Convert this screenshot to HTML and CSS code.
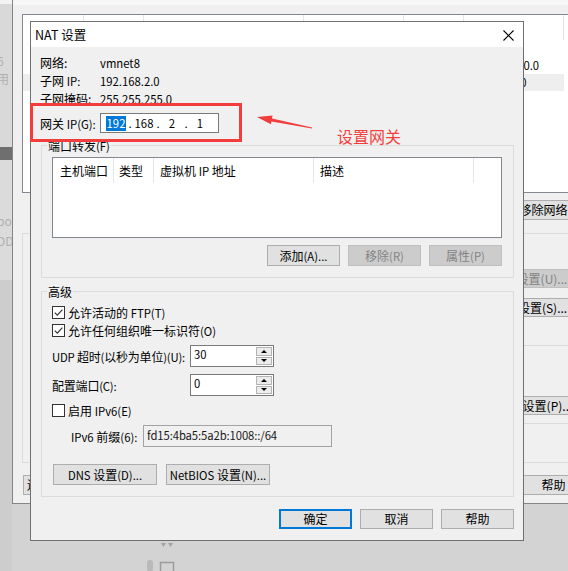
FILE: index.html
```html
<!DOCTYPE html>
<html lang="zh-CN">
<head>
<meta charset="utf-8">
<title>NAT 设置</title>
<link rel="stylesheet" href="styles.css">
</head>
<body>
<div class="desk">
  <div class="vm-side">
    <div class="side-a"><span class="side-glyph">6</span><span class="side-glyph">用</span></div>
    <div class="side-b"></div>
    <div class="side-c"><span class="side-glyph">po</span><span class="side-glyph">DD</span></div>
    <div class="side-d"></div>
  </div>

  <svg class="desk-icons" width="32" height="34" viewBox="0 0 32 34">
    <rect x="20" y="1" width="6" height="3" fill="#a9a9a9"/>
    <path d="M16 6 h5 l-2.5 4 z M23 6 h5 l-2.5 4 z" fill="#a3a3a3"/>
    <rect x="2" y="23" width="6" height="12" rx="3" fill="#b9b9b9"/>
    <rect x="15.5" y="25.5" width="13" height="10" fill="none" stroke="#9c9c9c" stroke-width="1.5"/>
  </svg>

  <div class="editor">
    <div class="ed-strip"></div>
    <div class="ed-list">
      <div class="ed-grid ed-head">
        <span></span><span></span><span></span><span></span><span></span><span></span>
      </div>
      <div class="ed-grid ed-row"><span></span><span></span><span></span><span></span><span></span><span></span></div>
      <div class="ed-grid ed-row"><span></span><span></span><span></span><span></span><span></span><span class="sub">192.168.100.0</span></div>
      <div class="ed-grid ed-row sel"><span></span><span></span><span></span><span></span><span></span><span class="sub">192.168.2.0</span></div>
    </div>
    <div class="ed-btns">
      <button class="btn ed-b1"></button>
      <button class="btn ed-b2">移除网络(O)</button>
      <button class="btn ed-b3">重命名网络(W)...</button>
    </div>
    <div class="ed-group">
      <div class="ed-side">
        <button class="btn off ed-set u">自动设置(U)...</button>
        <button class="btn ed-set s">NAT 设置(S)...</button>
        <div class="ed-line l1"></div>
        <button class="btn ed-set p">DHCP 设置(P)...</button>
        <div class="ed-line l2"></div>
      </div>
    </div>
    <div class="ed-foot">
      <button class="btn ed-reset"><span class="ed-reset-txt">还原默认设置(R)</span></button>
      <div class="ed-foot-right">
        <button class="btn ed-fb"></button>
        <button class="btn ed-fb"></button>
        <button class="btn ed-fb"></button>
        <button class="btn ed-fb">帮助</button>
      </div>
    </div>
  </div>

  <div class="nat">
    <div class="nat-title">
      <span>NAT 设置</span>
      <svg class="nat-close" width="11" height="11" viewBox="0 0 11 11"><path d="M0.5 0.5 L10.5 10.5 M10.5 0.5 L0.5 10.5" stroke="#000" stroke-width="1.1" fill="none"/></svg>
    </div>
    <div class="nat-body">
      <div class="info">
        <span>网络:</span><span class="en">vmnet8</span>
        <span>子网 <span class="en">IP:</span></span><span class="en">192.168.2.0</span>
        <span>子网掩码:</span><span class="en">255.255.255.0</span>
      </div>
      <div class="gw-row">
        <span class="gw-label">网关 <span class="en">IP(G):</span></span>
        <div class="ipbox en">
          <span class="oct"><span class="oct-sel">192</span></span><span class="dot">.</span><span class="oct">168</span><span class="dot">.</span><span class="oct">2</span><span class="dot">.</span><span class="oct">1</span>
        </div>
      </div>

      <div class="group g-ports">
        <div class="g-title">端口转发<span class="en">(F)</span></div>
        <div class="lv">
          <div class="lv-head">
            <span class="h1">主机端口</span><span class="h2">类型</span><span class="h3">虚拟机 <span class="en">IP</span> 地址</span><span class="h4">描述</span>
          </div>
        </div>
        <div class="btn-row">
          <button class="btn w73">添加<span class="en">(A)...</span></button>
          <button class="btn off w73">移除<span class="en">(R)</span></button>
          <button class="btn off w73">属性<span class="en">(P)</span></button>
        </div>
      </div>

      <div class="group g-adv">
        <div class="g-title">高级</div>
        <div class="chk-row first">
          <span class="chk"><svg width="11" height="11" viewBox="0 0 11 11"><path d="M1.8 5.6 L4.3 8.1 L9.4 2.6" stroke="#333" stroke-width="1.2" fill="none"/></svg></span>
          <span>允许活动的 <span class="en">FTP(T)</span></span>
        </div>
        <div class="chk-row">
          <span class="chk"><svg width="11" height="11" viewBox="0 0 11 11"><path d="M1.8 5.6 L4.3 8.1 L9.4 2.6" stroke="#333" stroke-width="1.2" fill="none"/></svg></span>
          <span>允许任何组织唯一标识符<span class="en">(O)</span></span>
        </div>
        <div class="spin-row udp">
          <span class="spin-label"><span class="en">UDP</span> 超时<span class="en">(</span>以秒为单位<span class="en">)(U):</span></span>
          <div class="spin">
            <span class="spin-val en">30</span>
            <span class="spin-btns"><span class="spin-b up"></span><span class="spin-b down"></span></span>
          </div>
        </div>
        <div class="spin-row port">
          <span class="spin-label">配置端口<span class="en">(C):</span></span>
          <div class="spin">
            <span class="spin-val en">0</span>
            <span class="spin-btns"><span class="spin-b up"></span><span class="spin-b down"></span></span>
          </div>
        </div>
        <div class="chk-row v6">
          <span class="chk"></span>
          <span>启用 <span class="en">IPv6(E)</span></span>
        </div>
        <div class="prefix-row">
          <span class="prefix-label"><span class="en">IPv6</span> 前缀<span class="en">(6):</span></span>
          <span class="prefix en">fd15:4ba5:5a2b:1008::/64</span>
        </div>
        <div class="dns-row">
          <button class="btn w104"><span class="en">DNS</span>&nbsp;设置<span class="en">(D)...</span></button>
          <button class="btn w104"><span class="en">NetBIOS</span>&nbsp;设置<span class="en">(N)...</span></button>
        </div>
      </div>

      <div class="nat-foot">
        <button class="btn def w73">确定</button>
        <button class="btn w73">取消</button>
        <button class="btn w73">帮助</button>
      </div>
    </div>
  </div>

  <div class="note-box"></div>
  <svg class="note-arrow" width="70" height="26" viewBox="0 0 70 26">
    <polygon points="7,9 22.5,7.6 22,10.4 62.1,19.5 61.9,20.5 21.4,13.4 20.9,16.2" fill="#f23d3d"/>
  </svg>
  <div class="note-text">设置网关</div>
</div>
</body>
</html>
```

FILE: styles.css
```css
* { box-sizing: border-box; }

body {
  margin: 0;
  width: 568px;
  height: 571px;
  overflow: hidden;
  background: #d3d3d3;
  font-family: "Noto Sans CJK SC", "Noto Sans", sans-serif;
  font-size: 12px;
  color: #000;
}

button {
  font: inherit;
  color: inherit;
  margin: 0;
  padding: 0;
}

.en { font-size: 11.3px; }

.desk {
  position: relative;
  width: 568px;
  height: 571px;
  overflow: hidden;
}

/* ---------- backdrop strip on the left ---------- */
.vm-side {
  width: 12px;
  display: flex;
  flex-direction: column;
  overflow: hidden;
}
.side-a {
  height: 147px;
  background: #d9d9d9;
  border-top: 4px solid #f3f3f3;
  display: flex;
  flex-direction: column;
  padding-top: 50px;
  gap: 4px;
}
.side-b { height: 13px; background: #6f6f6f; }
.side-c {
  height: 120px;
  background: #dbdbdb;
  display: flex;
  flex-direction: column;
  padding-top: 54px;
  gap: 6px;
}
.side-d { height: 291px; background: #cdcdcd; }
.side-glyph {
  color: #b0b0b0;
  line-height: 14px;
  margin-left: -3px;
  white-space: nowrap;
}

.desk-icons {
  position: absolute;
  left: 145px;
  top: 537px;
}

/* ---------- parent window (virtual network editor) ---------- */
.editor {
  position: absolute;
  left: 12px;
  top: 0;
  width: 620px;
  height: 504px;
  background: #f0f0f0;
  border-left: 1px solid #858585;
  border-bottom: 1px solid #858585;
  display: flex;
  flex-direction: column;
}
.ed-strip { height: 5px; background: #f7f7f7; }
.ed-list {
  margin: 9px 0 0 9px;
  height: 179px;
  background: #fff;
  border: 1px solid #828790;
  border-right: none;
}
.ed-grid {
  display: grid;
  grid-template-columns: 61px 60px 160px 100px 60px 100px;
  justify-content: start;
}
.ed-head { height: 25px; }
.ed-head span { border-right: 1px solid #e5e5e5; }
.ed-row { height: 17px; line-height: 17px; }
.ed-row span { white-space: nowrap; overflow: hidden; }
.ed-row .sub { padding-left: 3px; font-size: 11.3px; }
.ed-row.sel span { background: #eeeeee; }

.btn {
  flex-shrink: 0;
  height: 21px;
  display: flex;
  align-items: center;
  justify-content: center;
  background: #e1e1e1;
  border: 1px solid #adadad;
  white-space: nowrap;
  line-height: 16px;
}
.btn.off { background: #cccccc; border-color: #bfbfbf; color: #838383; }
.btn.def { border: 2px solid #0078d7; }
.w73 { width: 73px; }
.w104 { width: 104px; }

.ed-btns {
  display: flex;
  gap: 8px;
  margin: 7px 0 0 402px;
}
.ed-btns .btn { height: 20px; }
.ed-b1 { width: 88px; }
.ed-b2 { width: 82px; }
.ed-b3 { width: 104px; }

.ed-group {
  margin: 13px 0 0 9px;
  height: 230px;
  border: 1px solid #dcdcdc;
  border-right: none;
}
.ed-side {
  margin-left: 457px;
  width: 134px;
  display: flex;
  flex-direction: column;
}
.ed-set { width: 100px; height: 19px; }
.ed-set.u { margin-top: 35px; }
.ed-set.s { margin-top: 10px; }
.ed-line { height: 1px; background: #dadada; margin-left: -14px; }
.ed-line.l1 { margin-top: 28px; }
.ed-set.p { margin-top: 50px; }
.ed-line.l2 { margin-top: 8px; }

.ed-foot {
  display: flex;
  margin: 12px 0 0 10px;
}
.ed-foot .btn { height: 20px; }
.ed-reset {
  width: 110px;
  justify-content: flex-start;
  padding-left: 3px;
  overflow: hidden;
}
.ed-reset-txt { display: block; width: 8px; overflow: hidden; }
.ed-foot-right {
  display: flex;
  gap: 8px;
  margin-left: 141px;
}
.ed-fb { width: 73px; }

/* ---------- NAT dialog ---------- */
.nat {
  position: absolute;
  left: 30px;
  top: 21px;
  width: 494px;
  height: 520px;
  background: #f0f0f0;
  border: 1px solid #707070;
  display: flex;
  flex-direction: column;
}
.nat-title {
  height: 25px;
  background: #fff;
  display: flex;
  align-items: center;
  justify-content: space-between;
  padding: 0 9px 0 4px;
  font-size: 12.5px;
}
.nat-close { margin-top: 2px; }

.nat-body {
  flex: 1;
  padding: 7px 0 11px 0;
  display: flex;
  flex-direction: column;
}

.info {
  display: grid;
  grid-template-columns: 60px auto;
  line-height: 18px;
  margin-left: 9px;
}

.gw-row {
  display: flex;
  align-items: center;
  margin: 5px 0 0 9px;
  height: 20px;
}
.gw-label { width: 60px; white-space: nowrap; }
.ipbox {
  width: 119px;
  height: 20px;
  border: 1px solid #7a7a7a;
  background: #fff;
  display: flex;
  align-items: center;
  padding-left: 3px;
}
.oct { width: 24px; text-align: center; }
.dot { width: 4px; text-align: center; }
.oct-sel {
  display: inline-block;
  background: #0078d7;
  color: #fff;
  line-height: 15px;
  padding: 0 1px;
}

.group {
  border: 1px solid #dcdcdc;
  margin: 12px 9px 0 10px;
  padding: 0 11px 11px 10px;
}
.g-title {
  width: max-content;
  margin: -8px 0 0 -5px;
  padding: 0 1px;
  line-height: 16px;
  background: #f0f0f0;
}

.lv {
  margin-top: 3px;
  height: 81px;
  border: 1px solid #828790;
  background: #fff;
}
.lv-head { display: flex; height: 25px; line-height: 25px; }
.lv-head span { border-right: 1px solid #e5e5e5; padding-left: 6px; }
.lv-head span span { border: none; padding: 0; }
.lv-head .h1 { width: 61px; padding-left: 7px; }
.lv-head .h2 { width: 40px; padding-left: 5px; }
.lv-head .h3 { width: 160px; }
.lv-head .h4 { width: 160px; }

.btn-row {
  display: flex;
  justify-content: flex-end;
  gap: 8px;
  margin-top: 7px;
}

.g-adv { margin-top: 13px; padding-right: 10px; }

.chk-row {
  display: flex;
  align-items: center;
  gap: 3px;
  height: 18px;
}
.chk-row.first { margin-top: 3px; }
.chk-row.v6 { margin-top: 5px; }
.chk {
  width: 13px;
  height: 13px;
  border: 1px solid #333;
  background: #fff;
  display: flex;
  align-items: center;
  justify-content: center;
}

.spin-row {
  display: flex;
  align-items: center;
  height: 22px;
}
.spin-row.udp { margin-top: 6px; }
.spin-row.port { margin-top: 7px; }
.spin-label { width: 138px; white-space: nowrap; letter-spacing: -0.2px; }
.spin {
  width: 84px;
  height: 22px;
  border: 1px solid #7a7a7a;
  background: #fff;
  display: flex;
}
.spin-val { flex: 1; padding: 1px 0 0 3px; line-height: 15px; }
.spin-btns {
  width: 17px;
  display: flex;
  flex-direction: column;
  gap: 1px;
  padding: 1px 1px 1px 0;
}
.spin-b {
  flex: 1;
  border: 1px solid #b4b4b4;
  background: #ececec;
  display: flex;
  align-items: center;
  justify-content: center;
}
.spin-b::before {
  content: "";
  border-left: 3px solid transparent;
  border-right: 3px solid transparent;
}
.spin-b.up::before { border-bottom: 3px solid #000; }
.spin-b.down::before { border-top: 3px solid #000; }

.prefix-row {
  display: flex;
  align-items: center;
  margin-top: 6px;
  height: 22px;
}
.prefix-label { width: 91px; padding-left: 19px; white-space: nowrap; }
.prefix {
  width: 189px;
  height: 22px;
  border: 1px solid #a3a3a3;
  background: #f0f0f0;
  padding: 0 0 0 3px;
  line-height: 18px;
  color: #1a1a1a;
  letter-spacing: -0.1px;
}

.dns-row {
  display: flex;
  gap: 9px;
  margin: 17px 0 0 1px;
}

.nat-foot {
  display: flex;
  justify-content: flex-end;
  gap: 8px;
  margin: 12px 9px 0 0;
}
.nat-foot .btn { height: 20px; }

/* ---------- red annotation ---------- */
.note-box {
  position: absolute;
  left: 30px;
  top: 103px;
  width: 212px;
  height: 39px;
  border: 3px solid #f23d3d;
}
.note-arrow {
  position: absolute;
  left: 250px;
  top: 108px;
}
.note-text {
  position: absolute;
  left: 337px;
  top: 126px;
  font-size: 16px;
  line-height: 20px;
  color: #f43f3f;
}
```
